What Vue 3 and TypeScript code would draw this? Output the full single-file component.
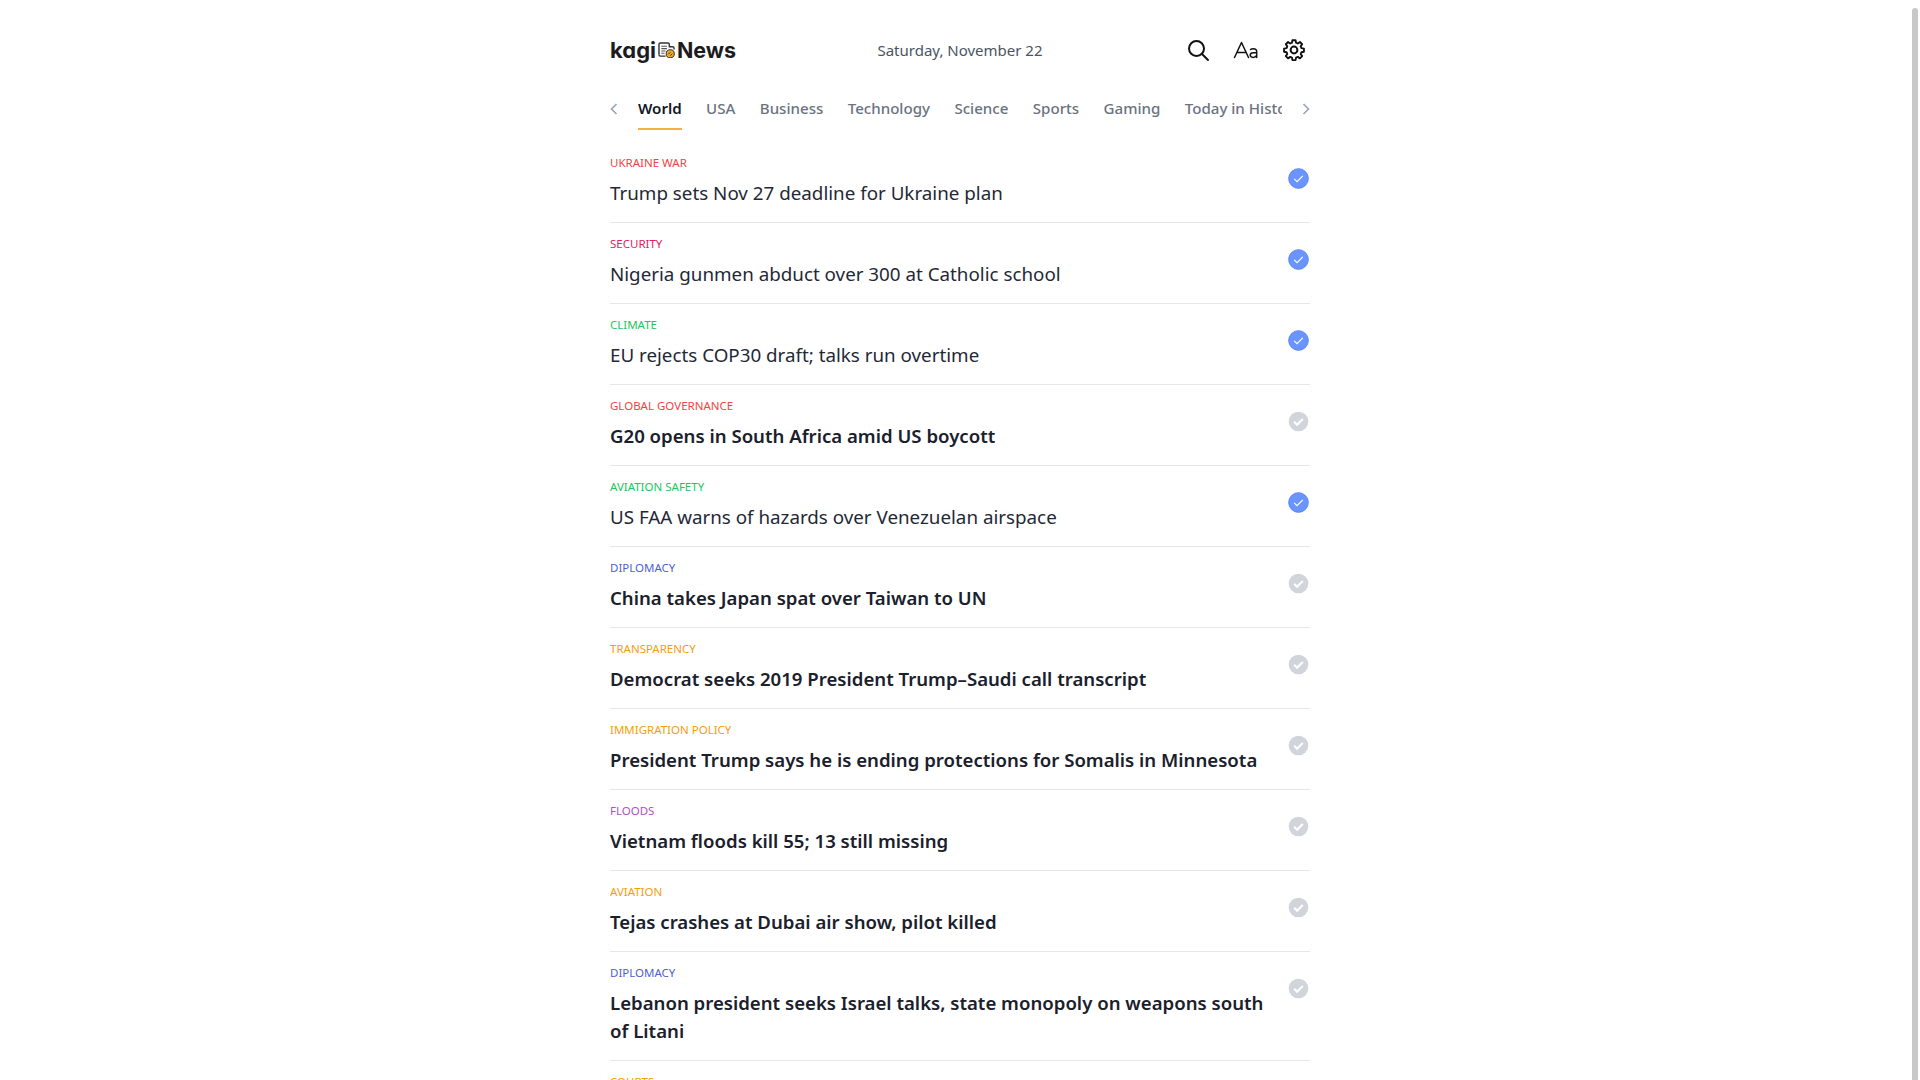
<script setup lang="ts">
interface Story { cat: string; color: string; title: string; read: boolean }
const tabs: string[] = ['World', 'USA', 'Business', 'Technology', 'Science', 'Sports', 'Gaming', 'Today in History']
const stories: Story[] = [
  { cat: 'UKRAINE WAR', color: '#ef4444', title: 'Trump sets Nov 27 deadline for Ukraine plan', read: true },
  { cat: 'SECURITY', color: '#e11d63', title: 'Nigeria gunmen abduct over 300 at Catholic school', read: true },
  { cat: 'CLIMATE', color: '#22c55e', title: 'EU rejects COP30 draft; talks run overtime', read: true },
  { cat: 'GLOBAL GOVERNANCE', color: '#ef4444', title: 'G20 opens in South Africa amid US boycott', read: false },
  { cat: 'AVIATION SAFETY', color: '#22c55e', title: 'US FAA warns of hazards over Venezuelan airspace', read: true },
  { cat: 'DIPLOMACY', color: '#4f5fd0', title: 'China takes Japan spat over Taiwan to UN', read: false },
  { cat: 'TRANSPARENCY', color: '#f59e0b', title: 'Democrat seeks 2019 President Trump–Saudi call transcript', read: false },
  { cat: 'IMMIGRATION POLICY', color: '#f59e0b', title: 'President Trump says he is ending protections for Somalis in Minnesota', read: false },
  { cat: 'FLOODS', color: '#a855c7', title: 'Vietnam floods kill 55; 13 still missing', read: false },
  { cat: 'AVIATION', color: '#f59e0b', title: 'Tejas crashes at Dubai air show, pilot killed', read: false },
  { cat: 'DIPLOMACY', color: '#4f5fd0', title: 'Lebanon president seeks Israel talks, state monopoly on weapons south of Litani', read: false },
  { cat: 'COURTS', color: '#f59e0b', title: '', read: false },
]
</script>

<template>
  <div class="page">
    <div class="column">
      <header class="head">
        <div class="brand">
          <span class="kagi">kagi</span>
          <svg class="paper" width="17" height="16" viewBox="0 0 18 17" fill="none">
            <path d="M1 13.500V2.500A1.500 1.500 0 0 1 2.500 1h8A1.500 1.500 0 0 1 12 2.500V5h3.500A1.500 1.500 0 0 1 17 6.500V8" stroke="#333" stroke-width="1.500"/>
            <path d="M1 13.500A1.500 1.500 0 0 0 2.500 15h5.500" stroke="#333" stroke-width="1.500"/>
            <path d="M3.500 4.500h6M3.500 7h6M3.500 9.500h4.500M3.500 12h3.500" stroke="#555" stroke-width="1.200"/>
            <circle cx="13" cy="12.500" r="4.300" fill="#f5a623" stroke="#222" stroke-width="1"/>
            <path d="M11 13l2-2M13 14.500l2-2" stroke="#222" stroke-width="1"/>
          </svg>
          <span class="news">News</span>
        </div>
        <div class="date">Saturday, November 22</div>
        <div class="tools">
          <svg width="24" height="24" viewBox="0 0 24 24" fill="none" stroke="#111" stroke-width="2" stroke-linecap="round">
            <circle cx="10.500" cy="10.500" r="7.500"/><path d="M16 16l6 6"/>
          </svg>
          <svg width="26" height="24" viewBox="0 0 26 24" fill="none" stroke="#111" stroke-width="1.500" stroke-linecap="round" stroke-linejoin="round">
            <path d="M1.500 19.500L8.500 4.500l7 15M4.200 14.500h8.800"/>
            <path d="M17.500 11.500q1-.8 2.800-.8q3.400 0 3.400 3v5.800M23.700 14.800h-3.200q-3.300 0-3.300 2.300q0 2.300 3 2.300q2.300 0 3.500-2"/>
          </svg>
          <svg width="24" height="24" viewBox="0 0 24 24" fill="none" stroke="#111" stroke-width="2" stroke-linejoin="round">
            <circle cx="12" cy="12" r="3.400"/>
            <path d="M10.300 2.500h3.400l.5 2.700 1.900.8 2.300-1.600 2.400 2.400-1.600 2.300.8 1.900 2.700.5v3.400l-2.700.5-.8 1.900 1.600 2.300-2.400 2.400-2.300-1.600-1.900.8-.5 2.700h-3.400l-.5-2.700-1.900-.8-2.300 1.600-2.400-2.400 1.600-2.300-.8-1.900-2.700-.5v-3.400l2.700-.5.800-1.900-1.600-2.300 2.400-2.400 2.300 1.600 1.900-.8z" transform="translate(12 12) scale(.93) translate(-12 -13)"/>
          </svg>
        </div>
      </header>

      <nav class="tabs">
        <svg class="chev" width="10" height="14" viewBox="0 0 10 14" fill="none" stroke="#9aa3b5" stroke-width="1.600"><path d="M7.500 2L2.500 7l5 5"/></svg>
        <div class="tablist">
          <span v-for="(t, i) in tabs" :key="t" class="tab" :class="{ active: i === 0 }">{{ t }}</span>
        </div>
        <svg class="chev" width="10" height="14" viewBox="0 0 10 14" fill="none" stroke="#9aa3b5" stroke-width="1.600"><path d="M2.500 2l5 5-5 5"/></svg>
      </nav>

      <main class="list">
        <article v-for="(s, i) in stories" :key="i" class="row">
          <div class="body">
            <div class="cat" :style="{ color: s.color }">{{ s.cat }}</div>
            <div class="title" :class="{ unread: !s.read }">{{ s.title }}</div>
          </div>
          <svg class="check" width="21" height="21" viewBox="0 0 22 22">
            <circle cx="11" cy="11" r="10.300" :fill="s.read ? '#6a94ff' : '#d1d5db'" :stroke="s.read ? '#5b84f5' : 'none'" stroke-width="1"/>
            <path v-if="s.read" d="M6.500 11.300l3 3 6-6" fill="none" stroke="#fff" stroke-width="1.200"/>
            <path v-else d="M6.500 11.300l3 3 6-6" fill="none" stroke="#fff" stroke-width="2.200"/>
          </svg>
        </article>
      </main>
    </div>
    <div class="scrollbar"></div>
  </div>
</template>

<style>
html, body { margin: 0; height: 100%; overflow: hidden; background: #fff; }
</style>

<style scoped>
.page { height: 1080px; overflow: hidden; position: relative; font-family: "Noto Sans", sans-serif; background: #fff; }
.column { width: 700px; margin: 0 auto; }
.head { height: 50px; padding-top: 25px; display: grid; grid-template-columns: 1fr auto 1fr; align-items: center; }
.brand { display: flex; align-items: center; color: #1c1c1c; }
.kagi { font-family: Inter, sans-serif; font-weight: 700; font-size: 22px; letter-spacing: 0; line-height: 30px; font-feature-settings: "cv11"; }
.paper { margin: 0 2px 0 2px; }
.news { font-family: Inter, sans-serif; font-weight: 700; font-size: 21.500px; letter-spacing: -.1px; line-height: 30px; }
.date { font-size: 15px; color: #4b5563; }
.tools { display: flex; justify-content: flex-end; align-items: center; gap: 23px; padding-right: 4px; }
.tabs { margin-top: 15px; height: 52px; display: flex; align-items: flex-start; }
.chev { flex: none; margin-top: 12px; }
.chev:first-child { margin-right: 19px; margin-left: -1px; }
.chev:last-child { margin-left: 19px; margin-right: -1px; }
.tablist { flex: 1; display: flex; gap: 24.400px; overflow: hidden; min-width: 0; }
.tab { flex: none; height: 40px; padding-top: 6px; box-sizing: border-box; font-size: 15.100px; font-weight: 500; color: #6b7280; line-height: 24px; }
.tab.active { color: #111827; font-weight: 600; border-bottom: 2px solid #f5b041; }
.list { display: flex; flex-direction: column; }
.row { display: flex; gap: 20px; border-bottom: 1px solid #e5e7eb; padding: 11px 0 15px; }
.body { flex: 1; min-width: 0; }
.cat { font-size: 11.500px; line-height: 20px; }
.title { margin-top: 6px; min-height: 28px; font-size: 18.800px; line-height: 28px; color: #1f2937; }
.title.unread { font-size: 18.600px; font-weight: 600; color: #1a202c; }
.check { flex: none; margin: 15px 1px 0 0; }
.scrollbar { position: absolute; right: 2px; top: 8px; bottom: 0; width: 6px; background: #c8c8c8; border-radius: 3px 3px 0 0; }
</style>
